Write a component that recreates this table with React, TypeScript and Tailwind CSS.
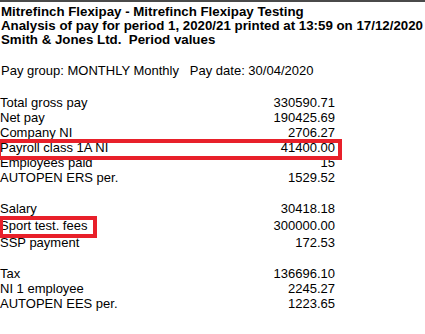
import React from "react";

type Row = { label: string; value: string; mt?: string };

const groupOne: Row[] = [
  { label: "Total gross pay", value: "330590.71" },
  { label: "Net pay", value: "190425.69" },
  { label: "Company NI", value: "2706.27" },
  { label: "Payroll class 1A NI", value: "41400.00" },
  { label: "Employees paid", value: "15" },
  { label: "AUTOPEN ERS per.", value: "1529.52" },
];

const groupTwo: Row[] = [
  { label: "Salary", value: "30418.18" },
  { label: "Sport test. fees", value: "300000.00", mt: "mt-[2px]" },
  { label: "SSP payment", value: "172.53", mt: "mt-[2px]" },
];

const groupThree: Row[] = [
  { label: "Tax", value: "136696.10" },
  { label: "NI 1 employee", value: "2245.27" },
  { label: "AUTOPEN EES per.", value: "1223.65" },
];

function ValueRow({ row }: { row: Row }) {
  return (
    <div className={`flex w-[335px] h-[15px] leading-[15px] justify-between whitespace-nowrap ${row.mt ?? ""}`}>
      <span>{row.label}</span>
      <span>{row.value}</span>
    </div>
  );
}

export default function App() {
  return (
    <div
      className="relative w-[425px] h-[334px] overflow-hidden bg-white text-black border-t-[2px] border-[#4a4a4a] text-[13px]"
      style={{ fontFamily: '"Liberation Sans", Arial, sans-serif' }}
    >
      {/* 헤더 */}
      <div className="pt-[3px] pl-[1px] font-bold text-[13.3px] leading-[14px] whitespace-nowrap">
        <div>Mitrefinch Flexipay - Mitrefinch Flexipay Testing</div>
        <div>Analysis of pay for period 1, 2020/21 printed at 13:59 on 17/12/2020</div>
        <div>Smith &amp; Jones Ltd.&nbsp; Period values</div>
      </div>

      <div className="mt-[16px] pl-[1px] h-[15px] leading-[15px] whitespace-pre">
        Pay group: MONTHLY Monthly   Pay date: 30/04/2020
      </div>

      <div className="mt-[17px]">
        {groupOne.map((r) => (
          <ValueRow key={r.label} row={r} />
        ))}
      </div>

      <div className="mt-[16px]">
        {groupTwo.map((r) => (
          <ValueRow key={r.label} row={r} />
        ))}
      </div>

      <div className="mt-[16px]">
        {groupThree.map((r) => (
          <ValueRow key={r.label} row={r} />
        ))}
      </div>

      {/* 강조 표시 */}
      <div className="absolute left-[-3px] top-[137px] w-[345px] h-[21px] border-[4px] border-[#e8202a]" />
      <div className="absolute left-[-1px] top-[214px] w-[98px] h-[22px] border-[4px] border-[#e8202a]" />
    </div>
  );
}
